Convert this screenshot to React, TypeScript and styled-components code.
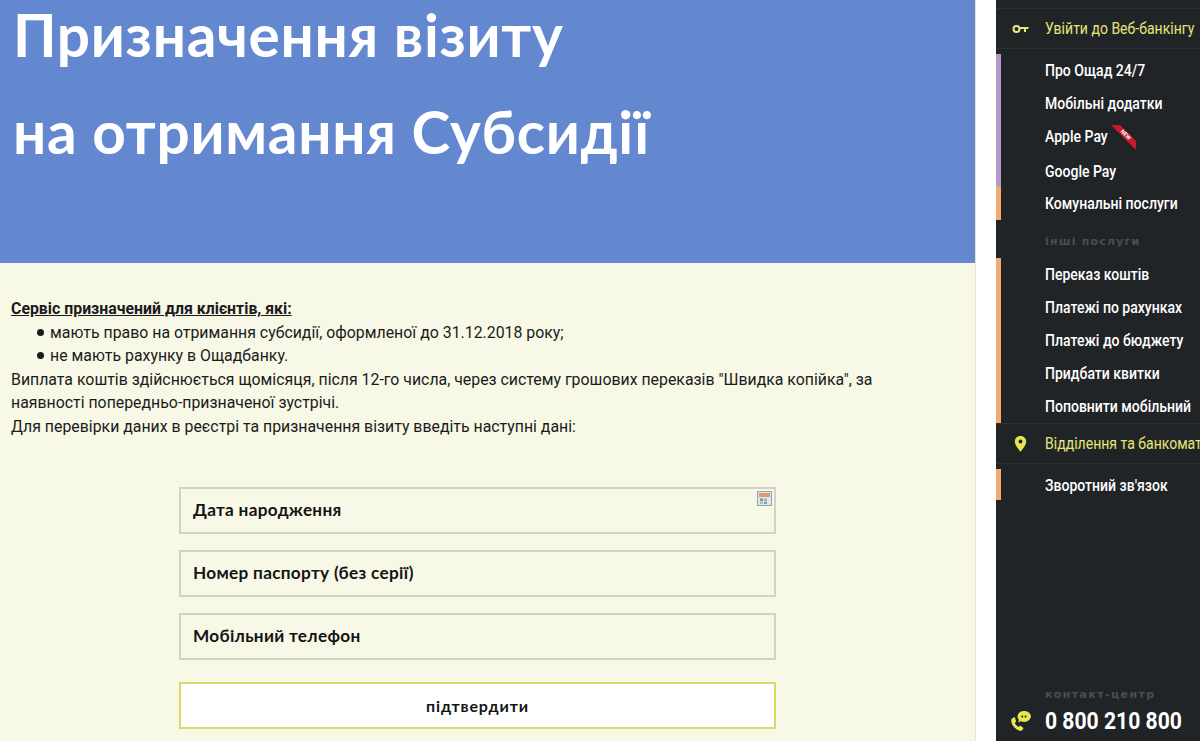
import React from "react";
import styled, { createGlobalStyle } from "styled-components";

const GlobalStyle = createGlobalStyle`
  html, body {
    margin: 0;
    padding: 0;
    background: #fff;
  }
`;

const Page = styled.div`
  width: 1200px;
  height: 741px;
  display: flex;
  overflow: hidden;
  background: #fff;
`;

const Main = styled.main`
  width: 976px;
  flex: none;
  display: flex;
  flex-direction: column;
  background: #f7f8e6;
  border-right: 1px solid #e9e6c8;
  box-sizing: border-box;
`;

const Hero = styled.header`
  height: 263px;
  flex: none;
  box-sizing: border-box;
  background: #6488d0;
  padding: 0 0 0 13px;
`;

const HeroTitle = styled.h1`
  margin: -14px 0 0;
  color: #fff;
  font-family: "Lato", "Open Sans", sans-serif;
  font-size: 58.5px;
  font-weight: 700;
  line-height: 97px;
  letter-spacing: 0.7px;
`;

const Content = styled.section`
  padding: 34px 0 0 11px;
  color: #1b1b1b;
  font-family: "Roboto", sans-serif;
  font-size: 15.87px;
  line-height: 23.5px;
`;

const Lead = styled.div`
  font-weight: 700;
  text-decoration: underline;
`;

const List = styled.ul`
  margin: 0;
  padding: 0 0 0 25.5px;
  list-style: none;
`;

const ListItem = styled.li`
  display: flex;
  align-items: center;
  gap: 6.5px;

  &::before {
    content: "";
    width: 7px;
    height: 7px;
    flex: none;
    border-radius: 50%;
    background: #1b1b1b;
  }
`;

const Form = styled.form`
  width: 597px;
  margin: 48.5px 0 0 168px;
  display: flex;
  flex-direction: column;
  gap: 16px;
`;

const Field = styled.div`
  position: relative;
  height: 47px;
  box-sizing: border-box;
  border: 2px solid #d2d3c4;
  padding-left: 12px;
  display: flex;
  align-items: center;
  color: #141414;
  font-family: "Lato", "Open Sans", sans-serif;
  font-size: 17.2px;
  font-weight: 700;
  letter-spacing: 0.3px;
`;

const CalendarIcon = styled.svg`
  position: absolute;
  top: 2px;
  right: 2px;
`;

const Submit = styled.button`
  height: 47px;
  margin-top: 6px;
  box-sizing: border-box;
  background: #fff;
  border: 2px solid #d9d868;
  color: #141414;
  font-family: "Lato", "Open Sans", sans-serif;
  font-size: 16px;
  font-weight: 700;
  letter-spacing: 0.85px;
`;

const Sidebar = styled.aside`
  width: 204px;
  margin-left: 20px;
  flex: none;
  display: flex;
  flex-direction: column;
  padding-top: 8px;
  box-sizing: border-box;
  background: #212427;
  color: #fff;
  font-family: "Roboto", sans-serif;
`;

const AccentRow = styled.div`
  height: 41px;
  flex: none;
  display: flex;
  align-items: center;
  margin-bottom: 5px;
  box-sizing: border-box;
  white-space: nowrap;
  color: #e6e67a;
  font-weight: 400;
  border-top: 1px solid #2e3134;
  border-bottom: 1px solid #2e3134;
`;

const IconSlot = styled.span`
  width: 49px;
  flex: none;
  display: flex;
  justify-content: center;
`;

const NavText = styled.span`
  display: inline-block;
  font-size: 16.5px;
  transform: scaleX(0.85);
  transform-origin: left center;
`;

const Group = styled.div<{ $stripe: string; $height: number }>`
  height: ${(p) => p.$height}px;
  flex: none;
  display: flex;
  flex-direction: column;
  box-sizing: border-box;
  padding-left: 44px;
  font-weight: 500;
  white-space: nowrap;
  border-left: 5px solid ${(p) => p.$stripe};
`;

const NavItem = styled.div<{ $height?: number }>`
  position: relative;
  display: flex;
  align-items: center;
  height: ${(p) => p.$height ?? 33}px;
  flex: none;
`;

const Ribbon = styled.svg`
  position: absolute;
  left: 66px;
  top: 5px;
`;

const SubHeading = styled.div`
  height: 38px;
  flex: none;
  display: flex;
  align-items: center;
  box-sizing: border-box;
  padding: 4px 0 0 49px;
  color: #4b4e51;
  font-family: "DejaVu Sans", sans-serif;
  font-size: 11px;
  font-weight: 700;
  letter-spacing: 1.2px;
`;

const ContactBlock = styled.div`
  margin-top: auto;
  padding-bottom: 3px;
`;

const ContactLabel = styled.div`
  padding-left: 49px;
  margin-bottom: 2px;
  color: #4b4e51;
  font-family: "DejaVu Sans", sans-serif;
  font-size: 11px;
  font-weight: 700;
  line-height: 14px;
  letter-spacing: 1.4px;
`;

const PhoneRow = styled.div`
  display: flex;
  align-items: center;
  height: 34px;
  white-space: nowrap;
`;

const PhoneNumber = styled.span`
  display: inline-block;
  color: #fff;
  font-size: 24px;
  font-weight: 700;
  transform: scaleX(0.88);
  transform-origin: left center;
`;

const KeyIcon = () => (
  <svg width="17" height="10" viewBox="0 0 17 10" fill="none">
    <circle cx="4.5" cy="5" r="3" stroke="#e6e67a" strokeWidth="2" />
    <path d="M8 4h8.500M13 4v4" stroke="#e6e67a" strokeWidth="2" />
  </svg>
);

const PinIcon = () => (
  <svg width="13" height="16" viewBox="0 0 13 16">
    <path
      fillRule="evenodd"
      fill="#e6e64e"
      d="M6.500 0C3 0 .8 2.500.8 5.500c0 3.500 3.500 7.500 5.700 10.300 2.200-2.800 5.700-6.800 5.700-10.300C12.200 2.500 10 0 6.500 0zm0 3.600a2 2 0 110 4 2 2 0 010-4z"
    />
  </svg>
);

const PhoneChatIcon = () => (
  <svg width="21" height="21" viewBox="0 0 21 21">
    <path
      fill="#e6e64e"
      d="M3.500 6.500L1.500 8c-1 2.500.5 6 3 8.500 2 2 4.500 3.500 6.500 3.500l2-1.800c.5-.6.400-1.200-.1-1.600l-2-1.500c-.6-.4-1-.3-1.500.1l-.9.8c-1.300-.7-3.200-2.800-3.700-4l.9-.9c.4-.5.500-1 .1-1.500L5 6.600c-.4-.5-1-.6-1.500-.1z"
    />
    <path fill="#e6e64e" d="M14 0a6.500 5.500 0 00-5 9L8 11.500l3-1.300A6.500 5.500 0 1014 0z" />
    <circle cx="12.200" cy="5.500" r="1" fill="#212427" />
    <circle cx="15.500" cy="5.500" r="1" fill="#212427" />
  </svg>
);

const CalendarGlyph = () => (
  <CalendarIcon width="15" height="15" viewBox="0 0 15 15">
    <rect x="0.500" y="0.500" width="14" height="14" fill="#dfe6ee" stroke="#8ea2b8" />
    <rect x="2" y="2" width="11" height="4" fill="#dd9a70" />
    <rect x="3" y="7.500" width="3" height="2.500" fill="#6f9f86" />
    <rect x="7" y="7.500" width="3" height="2.500" fill="#9fb8a8" />
    <rect x="3" y="10.800" width="3" height="2" fill="#9fb8a8" />
    <rect x="7" y="10.800" width="3" height="2" fill="#6f9f86" />
  </CalendarIcon>
);

const NewRibbon = () => (
  <Ribbon width="26" height="26" viewBox="0 0 26 26">
    <polygon points="0,0 9,0 25,16 25,25" fill="#c8192c" />
    <text
      x="13.500"
      y="11"
      fill="#fff"
      fontSize="5.500"
      fontWeight="700"
      fontFamily="Roboto, sans-serif"
      textAnchor="middle"
      transform="rotate(45 13.500 11)"
    >
      NEW
    </text>
  </Ribbon>
);

export default function App() {
  return (
    <Page>
      <GlobalStyle />
      <Main>
        <Hero>
          <HeroTitle>
            Призначення візиту
            <br />
            на отримання Субсидії
          </HeroTitle>
        </Hero>
        <Content>
          <Lead>Сервіс призначений для клієнтів, які:</Lead>
          <List>
            <ListItem>мають право на отримання субсидії, оформленої до 31.12.2018 року;</ListItem>
            <ListItem>не мають рахунку в Ощадбанку.</ListItem>
          </List>
          Виплата коштів здійснюється щомісяця, після 12-го числа, через систему грошових переказів "Швидка копійка", за
          <br />
          наявності попередньо-призначеної зустрічі.
          <br />
          Для перевірки даних в реєстрі та призначення візиту введіть наступні дані:
          <Form>
            <Field>
              Дата народження
              <CalendarGlyph />
            </Field>
            <Field>Номер паспорту (без серії)</Field>
            <Field>Мобільний телефон</Field>
            <Submit type="button">підтвердити</Submit>
          </Form>
        </Content>
      </Main>
      <Sidebar>
        <AccentRow>
          <IconSlot>
            <KeyIcon />
          </IconSlot>
          <NavText>Увійти до Веб-банкінгу</NavText>
        </AccentRow>
        <Group $stripe="#b49ac4" $height={133}>
          <NavItem>
            <NavText>Про Ощад 24/7</NavText>
          </NavItem>
          <NavItem>
            <NavText>Мобільні додатки</NavText>
          </NavItem>
          <NavItem>
            <NavText>Apple Pay</NavText>
            <NewRibbon />
          </NavItem>
          <NavItem $height={37}>
            <NavText>Google Pay</NavText>
          </NavItem>
        </Group>
        <Group $stripe="#f2ab72" $height={33}>
          <NavItem>
            <NavText>Комунальні послуги</NavText>
          </NavItem>
        </Group>
        <SubHeading>інші послуги</SubHeading>
        <Group $stripe="#f2ab72" $height={165}>
          <NavItem>
            <NavText>Переказ коштів</NavText>
          </NavItem>
          <NavItem>
            <NavText>Платежі по рахунках</NavText>
          </NavItem>
          <NavItem>
            <NavText>Платежі до бюджету</NavText>
          </NavItem>
          <NavItem>
            <NavText>Придбати квитки</NavText>
          </NavItem>
          <NavItem>
            <NavText>Поповнити мобільний</NavText>
          </NavItem>
        </Group>
        <AccentRow>
          <IconSlot>
            <PinIcon />
          </IconSlot>
          <NavText>Відділення та банкомати</NavText>
        </AccentRow>
        <Group $stripe="#f2ab72" $height={31}>
          <NavItem>
            <NavText>Зворотний зв'язок</NavText>
          </NavItem>
        </Group>
        <ContactBlock>
          <ContactLabel>контакт-центр</ContactLabel>
          <PhoneRow>
            <IconSlot>
              <PhoneChatIcon />
            </IconSlot>
            <PhoneNumber>0 800 210 800</PhoneNumber>
          </PhoneRow>
        </ContactBlock>
      </Sidebar>
    </Page>
  );
}
